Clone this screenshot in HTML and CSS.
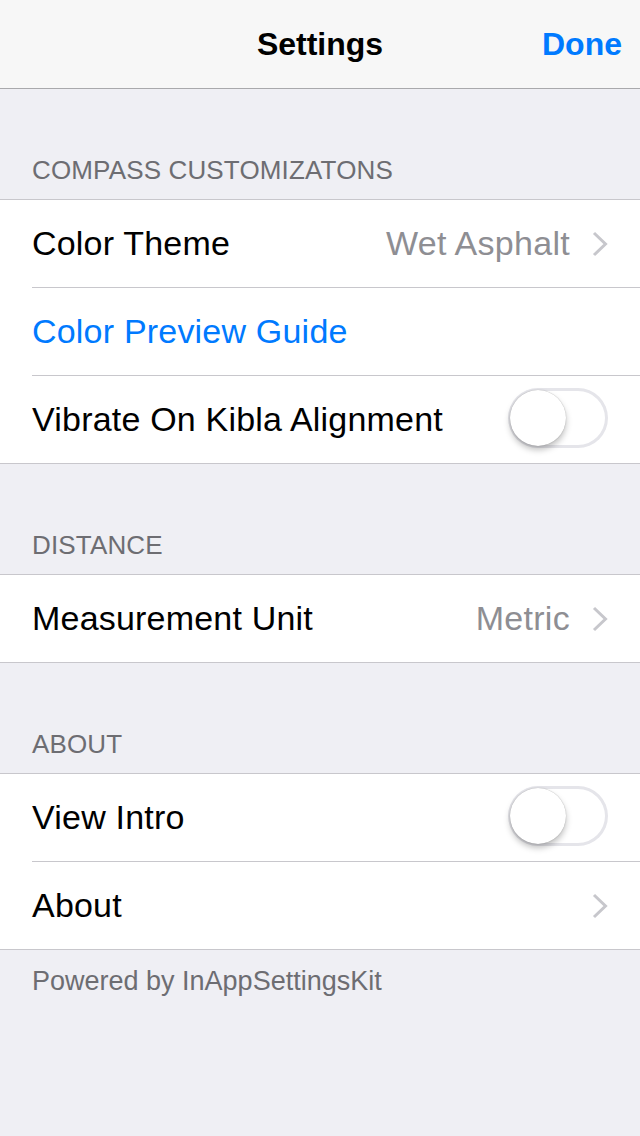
FILE: index.html
```html
<!DOCTYPE html>
<html>
<head>
  <title>Settings</title>
  <link rel="stylesheet" href="styles.css">
</head>
<body>
  <div class="nav-bar">
    <div></div>
    <h1 class="nav-title">Settings</h1>
    <a class="nav-done">Done</a>
  </div>

  <div class="settings">
    <div class="section-header">COMPASS CUSTOMIZATONS</div>
    <div class="group">
      <div class="row">
        <span class="row-label">Color Theme</span>
        <span class="row-value">Wet Asphalt</span>
        <svg class="chevron" width="16" height="26" viewBox="0 0 16 26"><path d="M2 2 L13.5 13 L2 24" fill="none" stroke="#c7c7cc" stroke-width="3"/></svg>
      </div>
      <div class="row">
        <span class="row-label link">Color Preview Guide</span>
      </div>
      <div class="row">
        <span class="row-label">Vibrate On Kibla Alignment</span>
        <div class="switch"><span class="knob"></span></div>
      </div>
    </div>

    <div class="section-header">DISTANCE</div>
    <div class="group">
      <div class="row">
        <span class="row-label">Measurement Unit</span>
        <span class="row-value">Metric</span>
        <svg class="chevron" width="16" height="26" viewBox="0 0 16 26"><path d="M2 2 L13.5 13 L2 24" fill="none" stroke="#c7c7cc" stroke-width="3"/></svg>
      </div>
    </div>

    <div class="section-header">ABOUT</div>
    <div class="group">
      <div class="row">
        <span class="row-label">View Intro</span>
        <div class="switch"><span class="knob"></span></div>
      </div>
      <div class="row">
        <span class="row-label">About</span>
        <svg class="chevron" width="16" height="26" viewBox="0 0 16 26"><path d="M2 2 L13.5 13 L2 24" fill="none" stroke="#c7c7cc" stroke-width="3"/></svg>
      </div>
    </div>

    <div class="section-footer">Powered by InAppSettingsKit</div>
  </div>
</body>
</html>
```

FILE: styles.css
```css
body {
  font-family: "Liberation Sans", Arial, sans-serif;
  background-color: #efeff4;
  margin: 0;
  padding: 0;
  height: 1136px;
}

.nav-bar {
  display: grid;
  grid-template-columns: 1fr auto 1fr;
  align-items: center;
  height: 88px;
  background-color: #f7f7f7;
  border-bottom: 1px solid #a9a9ac;
}

.nav-title {
  margin: 0;
  font-size: 32px;
  font-weight: bold;
  color: #000;
}

.nav-done {
  justify-self: end;
  padding-right: 18px;
  font-size: 32px;
  font-weight: bold;
  color: #007aff;
}

.section-header {
  padding: 65px 32px 13px;
  font-size: 26px;
  line-height: 32px;
  letter-spacing: 0.15px;
  color: #6d6d72;
}

.group {
  background-color: #fff;
  border-top: 1px solid #c8c7cc;
  border-bottom: 1px solid #c8c7cc;
}

.row {
  display: flex;
  align-items: center;
  height: 87px;
  margin-left: 32px;
  padding-right: 32px;
  border-bottom: 1px solid #c8c7cc;
}

.row:last-child {
  border-bottom: none;
}

.row-label {
  flex: 1;
  font-size: 34px;
  letter-spacing: 0.2px;
  color: #000;
}

.row-label.link {
  color: #007aff;
}

.row-value {
  font-size: 34px;
  letter-spacing: 0.3px;
  color: #8e8e93;
  margin-right: 22px;
}

.chevron {
  display: block;
}

.switch {
  display: flex;
  box-sizing: border-box;
  width: 100px;
  height: 60px;
  padding: 2px;
  margin-top: -3px;
  border-radius: 30px;
  box-shadow: inset 0 0 0 3px #e5e5ea;
  background-color: #fff;
}

.knob {
  width: 56px;
  height: 56px;
  border-radius: 50%;
  background-color: #fff;
  box-shadow: 0 4px 6px rgba(0, 0, 0, 0.25), 0 0 1px rgba(0, 0, 0, 0.35);
}

.section-footer {
  padding: 15px 32px;
  font-size: 27px;
  line-height: 32px;
  color: #6d6d72;
}
```
